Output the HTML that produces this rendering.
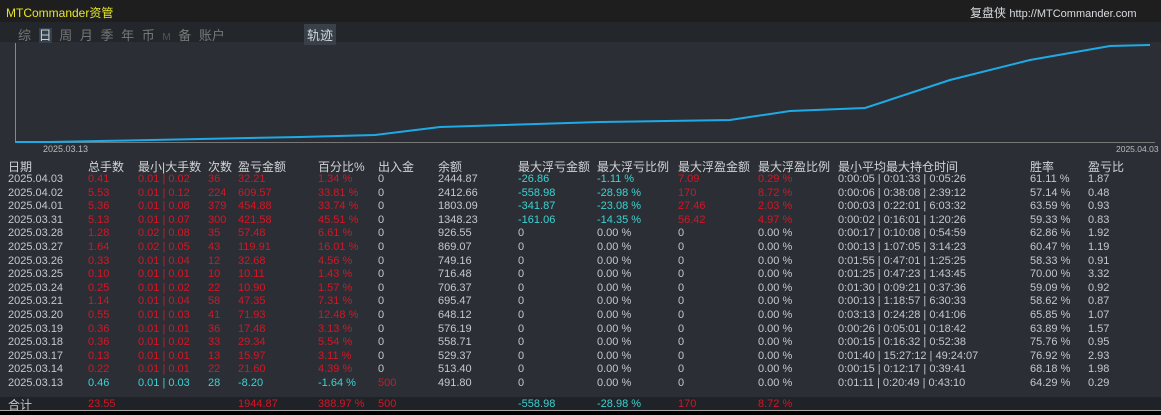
<!DOCTYPE html><html><head><meta charset="utf-8"><style>
body{margin:0;width:1161px;height:414px;background:#2b2f35;overflow:hidden;font-family:"Liberation Sans","Noto Sans CJK SC",sans-serif;font-size:11px;color:#c4c8cc;position:relative}
.a{position:absolute;white-space:nowrap}
.r{color:#d41626}.c{color:#3cd2d2}
.h{font-size:12px;color:#d0d4d8}
</style></head><body>
<div class="a" style="left:0;top:0;width:1161px;height:22px;background:#1e1e1e"></div>
<div class="a" style="left:6px;top:4px;color:#e6e62a;font-size:12px">MTCommander资管</div>
<div class="a" style="left:970px;top:4px;color:#d8dce0;font-size:12px">复盘侠 <span style="font-size:11px">http://MTCommander.com</span></div>
<div class="a" style="left:0;top:22px;width:1161px;height:20px;background:#23272c"></div>
<div class="a" style="left:18px;top:25px;font-size:13px;color:#777;word-spacing:4px">综 <span style="background:#36404a;color:#c8d0d8">日</span> 周 月 季 年 币 <span style="font-size:10px;color:#555">M</span> 备 账户</div>
<div class="a" style="left:304px;top:24px;padding:1px 3px;background:#3a4048;color:#d0d8e0;font-size:13px">轨迹</div>
<svg class="a" style="left:0;top:40px" width="1161" height="120">
<line x1="15.5" y1="3" x2="15.5" y2="103" stroke="#888" stroke-width="1"/>
<line x1="15" y1="102.5" x2="1155" y2="102.5" stroke="#777" stroke-width="1"/>
<polyline fill="none" stroke="#1eaae6" stroke-width="2" points="15,102 50,102 100,101 200,99 300,97 375,95 440,87 600,82 730,80 790,71 865,68 950,40 1030,20 1110,6 1150,5"/>
</svg>
<div class="a" style="left:43px;top:144px;font-size:9px;color:#bbb">2025.03.13</div>
<div class="a" style="left:1116px;top:144px;font-size:8.5px;color:#bbb">2025.04.03</div>
<div class="a" style="left:0;top:397px;width:1161px;height:13px;background:#1f2226"></div>
<div class="a" style="left:0;top:410px;width:1161px;height:4px;background:#000;border-top:1px solid #aaa"></div>
<div id="t"></div>
<script>
var X=[8,88,138,208,238,318,378,438,518,597,678,758,838,1030,1088];
var H=["日期","总手数","最小|大手数","次数","盈亏金额","百分比%","出入金","余额","最大浮亏金额","最大浮亏比例","最大浮盈金额","最大浮盈比例","最小平均最大持仓时间","胜率","盈亏比"];
var D=[
["2025.04.03","0.41","0.01 | 0.02","36","32.21","1.34 %","0","2444.87","-26.86","-1.11 %","7.09","0.29 %","0:00:05 | 0:01:33 | 0:05:26","61.11 %","1.87"],
["2025.04.02","5.53","0.01 | 0.12","224","609.57","33.81 %","0","2412.66","-558.98","-28.98 %","170","8.72 %","0:00:06 | 0:38:08 | 2:39:12","57.14 %","0.48"],
["2025.04.01","5.36","0.01 | 0.08","379","454.88","33.74 %","0","1803.09","-341.87","-23.08 %","27.46","2.03 %","0:00:03 | 0:22:01 | 6:03:32","63.59 %","0.93"],
["2025.03.31","5.13","0.01 | 0.07","300","421.58","45.51 %","0","1348.23","-161.06","-14.35 %","56.42","4.97 %","0:00:02 | 0:16:01 | 1:20:26","59.33 %","0.83"],
["2025.03.28","1.28","0.02 | 0.08","35","57.48","6.61 %","0","926.55","0","0.00 %","0","0.00 %","0:00:17 | 0:10:08 | 0:54:59","62.86 %","1.92"],
["2025.03.27","1.64","0.02 | 0.05","43","119.91","16.01 %","0","869.07","0","0.00 %","0","0.00 %","0:00:13 | 1:07:05 | 3:14:23","60.47 %","1.19"],
["2025.03.26","0.33","0.01 | 0.04","12","32.68","4.56 %","0","749.16","0","0.00 %","0","0.00 %","0:01:55 | 0:47:01 | 1:25:25","58.33 %","0.91"],
["2025.03.25","0.10","0.01 | 0.01","10","10.11","1.43 %","0","716.48","0","0.00 %","0","0.00 %","0:01:25 | 0:47:23 | 1:43:45","70.00 %","3.32"],
["2025.03.24","0.25","0.01 | 0.02","22","10.90","1.57 %","0","706.37","0","0.00 %","0","0.00 %","0:01:30 | 0:09:21 | 0:37:36","59.09 %","0.92"],
["2025.03.21","1.14","0.01 | 0.04","58","47.35","7.31 %","0","695.47","0","0.00 %","0","0.00 %","0:00:13 | 1:18:57 | 6:30:33","58.62 %","0.87"],
["2025.03.20","0.55","0.01 | 0.03","41","71.93","12.48 %","0","648.12","0","0.00 %","0","0.00 %","0:03:13 | 0:24:28 | 0:41:06","65.85 %","1.07"],
["2025.03.19","0.36","0.01 | 0.01","36","17.48","3.13 %","0","576.19","0","0.00 %","0","0.00 %","0:00:26 | 0:05:01 | 0:18:42","63.89 %","1.57"],
["2025.03.18","0.36","0.01 | 0.02","33","29.34","5.54 %","0","558.71","0","0.00 %","0","0.00 %","0:00:15 | 0:16:32 | 0:52:38","75.76 %","0.95"],
["2025.03.17","0.13","0.01 | 0.01","13","15.97","3.11 %","0","529.37","0","0.00 %","0","0.00 %","0:01:40 | 15:27:12 | 49:24:07","76.92 %","2.93"],
["2025.03.14","0.22","0.01 | 0.01","22","21.60","4.39 %","0","513.40","0","0.00 %","0","0.00 %","0:00:15 | 0:12:17 | 0:39:41","68.18 %","1.98"],
["2025.03.13","0.46","0.01 | 0.03","28","-8.20","-1.64 %","500","491.80","0","0.00 %","0","0.00 %","0:01:11 | 0:20:49 | 0:43:10","64.29 %","0.29"]];
var s="";
H.forEach(function(h,i){s+='<div class="a h" style="left:'+X[i]+'px;top:158px">'+h+'</div>'});
D.forEach(function(r,j){var y=173+j*13.6;var neg=r[4][0]=="-";
r.forEach(function(v,i){var c="";
if(i>=1&&i<=5)c=neg?"c":"r";
if(i==6&&v!="0")c="r";
if(i==8||i==9){if(v!="0"&&v!="0.00 %")c="c";}
if(i==10||i==11){if(v!="0"&&v!="0.00 %")c="r";}
s+='<div class="a '+c+'" style="left:'+X[i]+'px;top:'+y+'px">'+v+'</div>'})});
var T=[[0,"合计",""],[88,"23.55","r"],[238,"1944.87","r"],[318,"388.97 %","r"],[378,"500","r"],[518,"-558.98","c"],[597,"-28.98 %","c"],[678,"170","r"],[758,"8.72 %","r"]];
T.forEach(function(t){s+='<div class="a '+t[2]+'" style="left:'+(t[0]||8)+'px;top:'+(t[0]?398:396)+'px;font-size:'+(t[0]?11:12)+'px">'+t[1]+'</div>'});
document.getElementById("t").innerHTML=s;
</script>
</body></html>
